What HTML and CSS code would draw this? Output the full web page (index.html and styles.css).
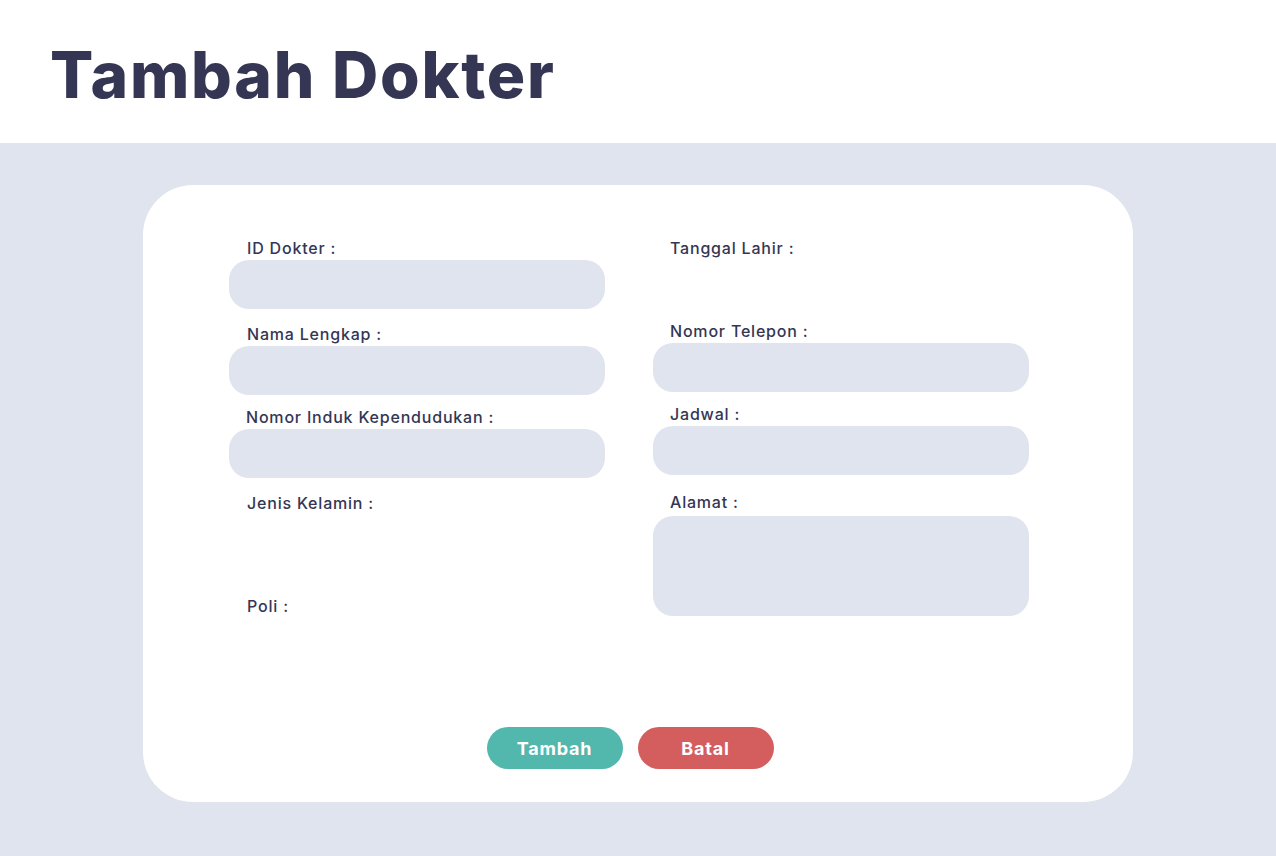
FILE: index.html
```html
<!DOCTYPE html>
<html lang="id">
<head>
<meta charset="utf-8">
<title>Tambah Dokter</title>
<link rel="stylesheet" href="styles.css">
</head>
<body>
<header class="page-header">
  <h1 class="page-title">Tambah Dokter</h1>
</header>
<main class="page-main">
  <form class="card">
    <div class="columns">
      <div class="col col-left">
        <div class="field f-id">
          <label class="label">ID Dokter :</label>
          <div class="input"></div>
        </div>
        <div class="field f-nama">
          <label class="label">Nama Lengkap :</label>
          <div class="input"></div>
        </div>
        <div class="field f-nik">
          <label class="label label-nik">Nomor Induk Kependudukan :</label>
          <div class="input"></div>
        </div>
        <div class="field f-jk">
          <label class="label">Jenis Kelamin :</label>
        </div>
        <div class="field f-poli">
          <label class="label">Poli :</label>
        </div>
      </div>
      <div class="col col-right">
        <div class="field f-tgl">
          <label class="label">Tanggal Lahir :</label>
        </div>
        <div class="field f-telp">
          <label class="label">Nomor Telepon :</label>
          <div class="input"></div>
        </div>
        <div class="field f-jadwal">
          <label class="label">Jadwal :</label>
          <div class="input"></div>
        </div>
        <div class="field f-alamat">
          <label class="label">Alamat :</label>
          <div class="input textarea"></div>
        </div>
      </div>
    </div>
    <div class="actions">
      <button type="button" class="btn btn-add">Tambah</button>
      <button type="button" class="btn btn-cancel">Batal</button>
    </div>
  </form>
</main>
</body>
</html>
```
FILE: styles.css
```css
* { box-sizing: border-box; }
html, body { margin: 0; padding: 0; }
body {
  background: #e0e4ef;
  font-family: Inter, "Noto Sans", sans-serif;
  color: #343654;
  width: 1276px;
  height: 856px;
  overflow: hidden;
}
.page-header {
  background: #ffffff;
  height: 143px;
  padding-left: 50px;
  display: flex;
  align-items: center;
}
.page-title {
  margin: 0;
  font-size: 64px;
  font-weight: 800;
  letter-spacing: 1.8px;
  color: #343654;
  line-height: 1;
  padding-top: 6px;
}
.page-main {
  padding-top: 42px;
}
.card {
  width: 990px;
  height: 617px;
  margin: 0 auto;
  background: #ffffff;
  border-radius: 50px;
  display: flex;
  flex-direction: column;
  padding: 51px 104px 33px 86px;
}
.columns {
  display: flex;
  gap: 48px;
}
.col {
  width: 376px;
  display: flex;
  flex-direction: column;
}
.label {
  display: block;
  font-size: 16px;
  line-height: 24px;
  font-weight: 500;
  letter-spacing: 0.8px;
  padding-left: 18px;
  color: #343654;
}
.col-right .label { padding-left: 17px; }
.label-nik { padding-left: 17px; }
.input {
  height: 49px;
  background: #e0e4ef;
  border-radius: 20px;
}
.textarea { height: 100px; margin-top: 2px; }
.f-nama { margin-top: 13px; }
.f-nik { margin-top: 10px; }
.f-jk { margin-top: 13px; }
.f-poli { margin-top: 79px; }
.f-tgl { margin-top: 0; }
.f-telp { margin-top: 59px; }
.f-jadwal { margin-top: 10px; }
.f-alamat { margin-top: 15px; }
.actions {
  margin-top: auto;
  display: flex;
  justify-content: center;
  gap: 15px;
  padding-left: 2px;
}
.btn {
  width: 136px;
  height: 42px;
  border: none;
  border-radius: 21px;
  color: #ffffff;
  font-family: Inter, "Noto Sans", sans-serif;
  font-size: 18px;
  font-weight: 700;
  letter-spacing: 0.8px;
  padding: 0;
}
.btn-add { background: #52b7ad; }
.btn-cancel { background: #d45d5d; }
```
